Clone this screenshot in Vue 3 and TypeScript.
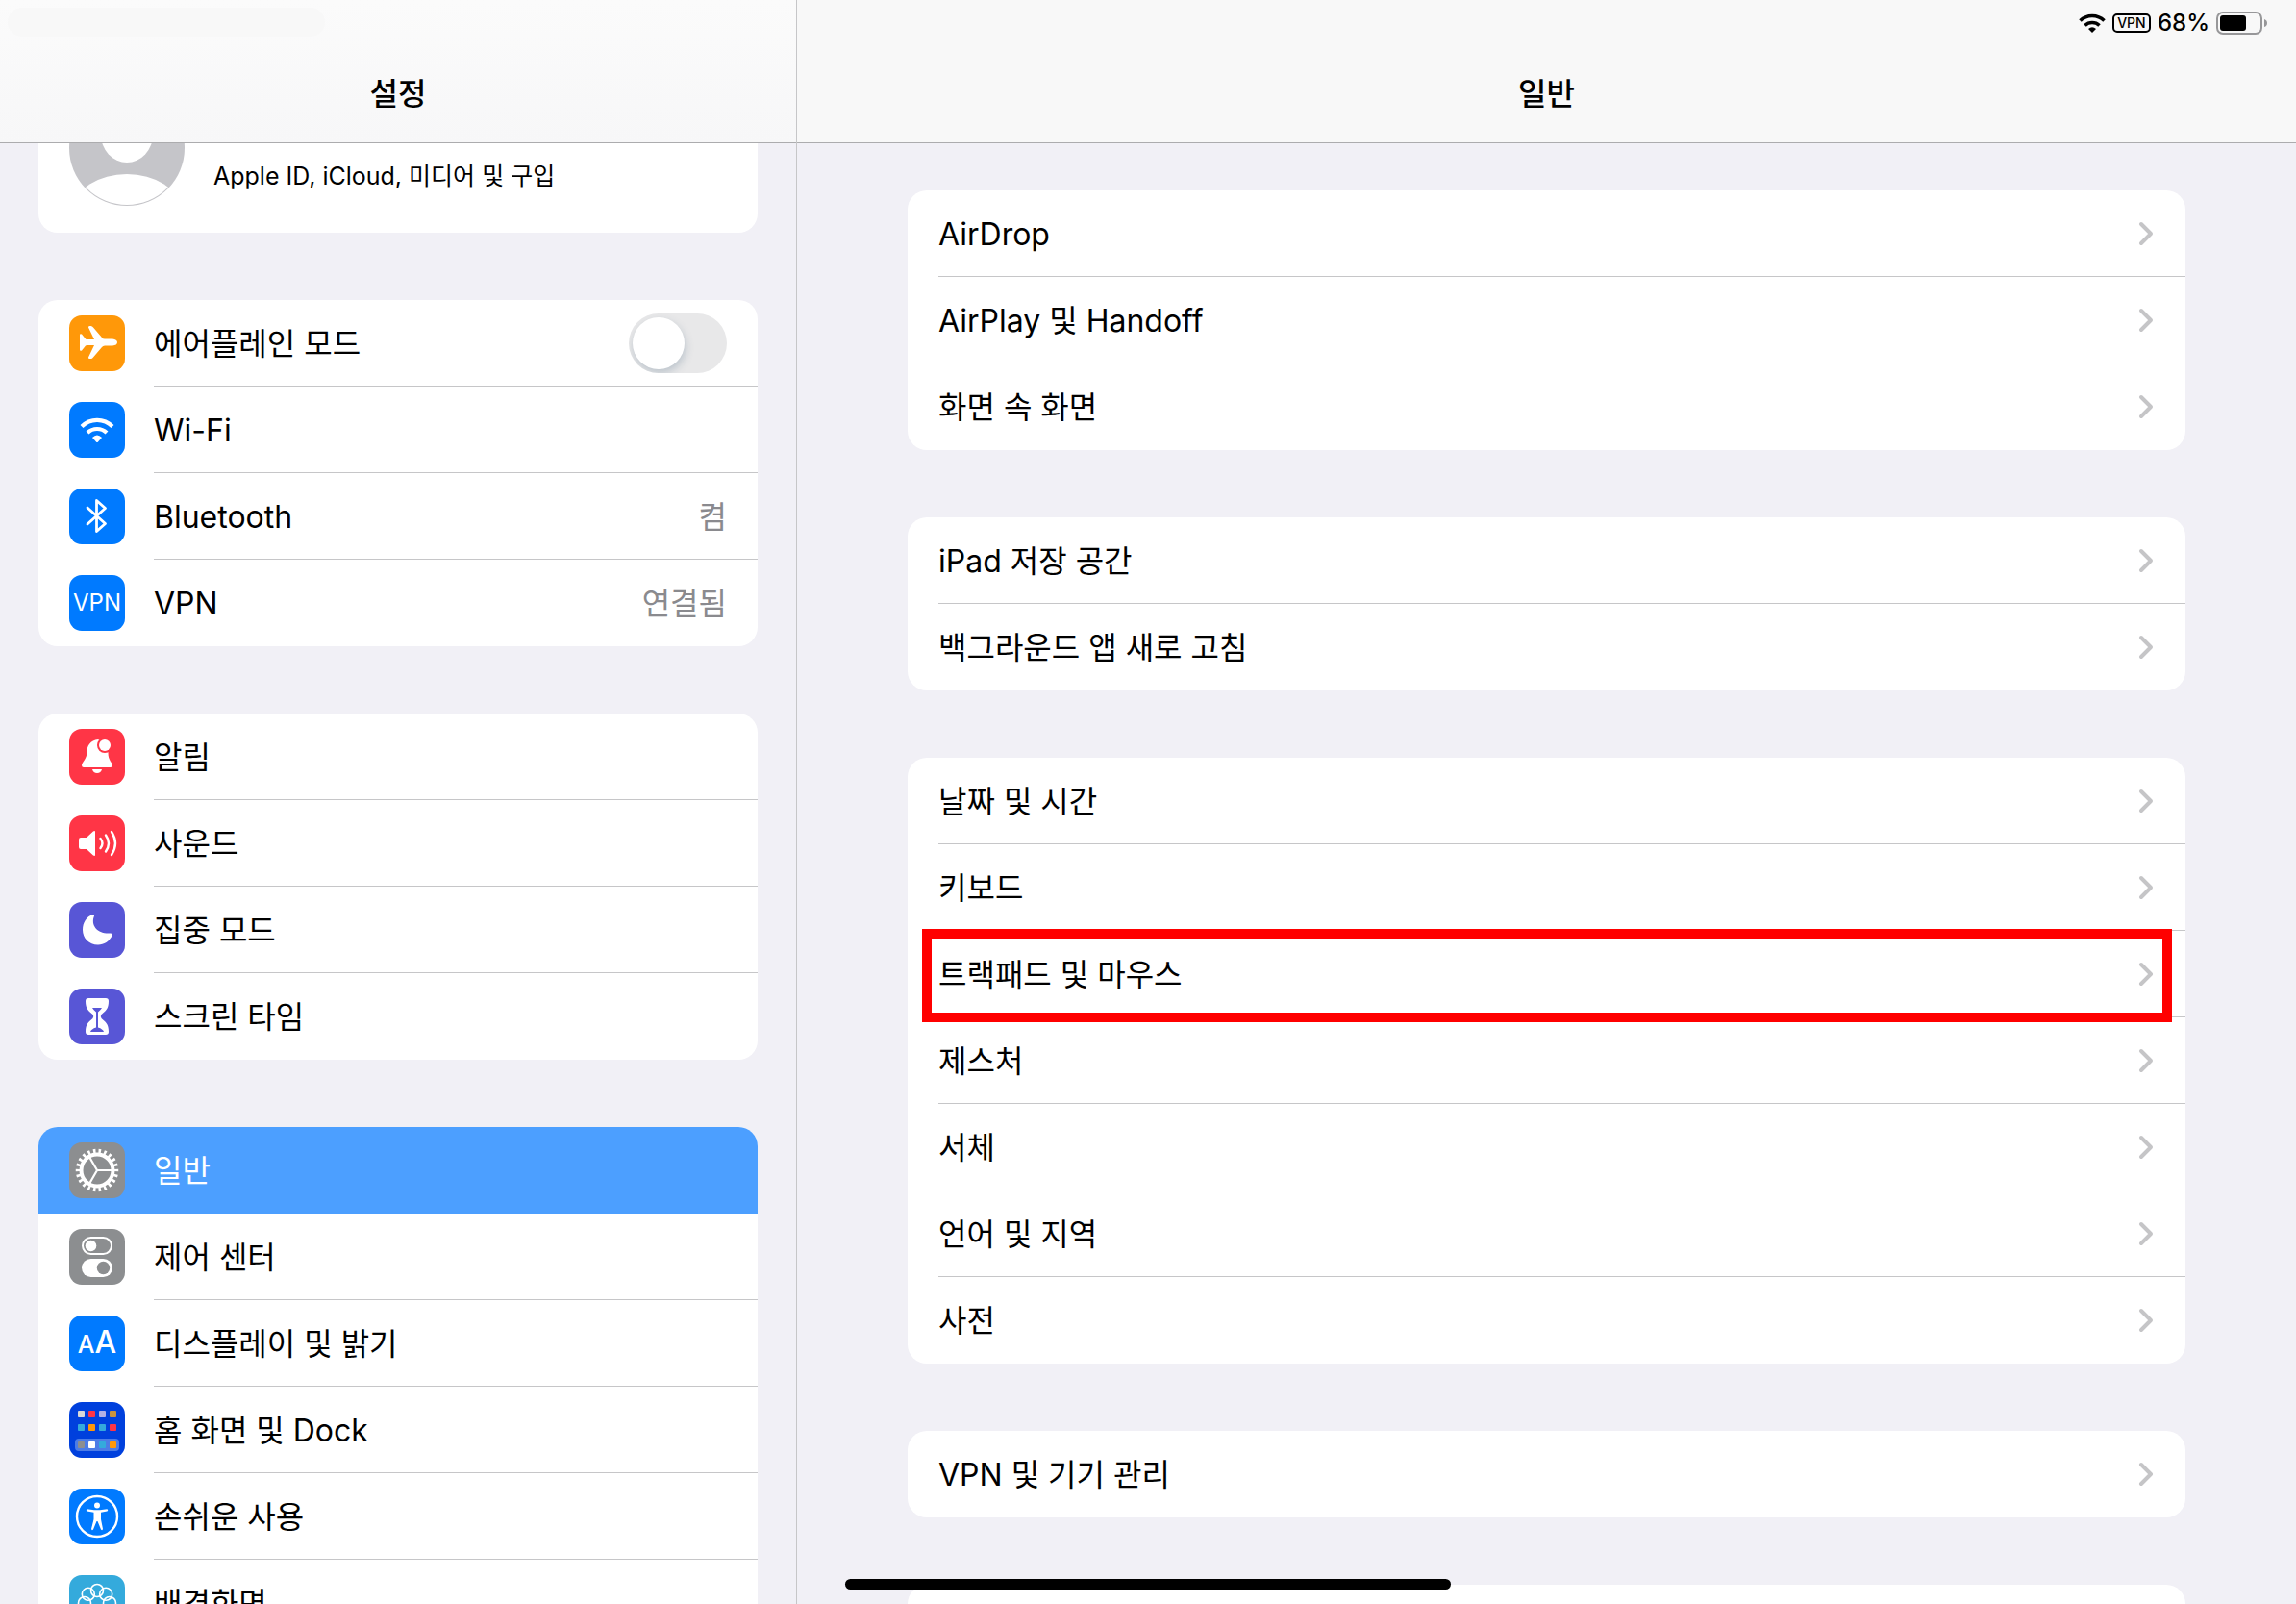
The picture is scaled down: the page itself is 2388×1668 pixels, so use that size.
<script setup lang="ts">
import { ref } from 'vue'

interface SideItem {
  label: string
  icon: string
  color: string
  value?: string
  toggle?: boolean
  active?: boolean
}

interface DetailItem {
  label: string
  marked?: boolean
}

const airplaneMode = ref(false)

const sideGroups: SideItem[][] = [
  [
    { label: '에어플레인 모드', icon: 'airplane', color: '#ff9809', toggle: true },
    { label: 'Wi-Fi', icon: 'wifi', color: '#007aff' },
    { label: 'Bluetooth', icon: 'bluetooth', color: '#007aff', value: '켬' },
    { label: 'VPN', icon: 'vpn', color: '#007aff', value: '연결됨' },
  ],
  [
    { label: '알림', icon: 'bell', color: '#ff3546' },
    { label: '사운드', icon: 'sound', color: '#ff3546' },
    { label: '집중 모드', icon: 'moon', color: '#5856d6' },
    { label: '스크린 타임', icon: 'hourglass', color: '#5856d6' },
  ],
  [
    { label: '일반', icon: 'gear', color: '#8c8e90', active: true },
    { label: '제어 센터', icon: 'control', color: '#8c8e90' },
    { label: '디스플레이 및 밝기', icon: 'display', color: '#007aff' },
    { label: '홈 화면 및 Dock', icon: 'home', color: '#0040dd' },
    { label: '손쉬운 사용', icon: 'access', color: '#007aff' },
    { label: '배경화면', icon: 'wallpaper', color: '#34aadc' },
  ],
]

const detailGroups: DetailItem[][] = [
  [{ label: 'AirDrop' }, { label: 'AirPlay 및 Handoff' }, { label: '화면 속 화면' }],
  [{ label: 'iPad 저장 공간' }, { label: '백그라운드 앱 새로 고침' }],
  [
    { label: '날짜 및 시간' },
    { label: '키보드' },
    { label: '트랙패드 및 마우스', marked: true },
    { label: '제스처' },
    { label: '서체' },
    { label: '언어 및 지역' },
    { label: '사전' },
  ],
  [{ label: 'VPN 및 기기 관리' }],
  [{ label: '' }],
]

const homeTiles = [
  ['#d8d8d8', '#ff3546', '#b3b1e4', '#c9933f'],
  ['#34aadc', '#ff9809', '#34aadc', '#ff3546'],
  ['#8c8e90', '#ffffff', '#34aadc', '#ff9809'],
]
const tileRows = [9, 23, 41]

const petals = Array.from({ length: 8 }, (_, i) => {
  const angle = (i * Math.PI) / 4
  return { x: 29 + 13 * Math.sin(angle), y: 29 - 13 * Math.cos(angle) }
})
</script>

<template>
  <div class="screen">
    <aside class="pane sidebar">
      <header class="bar">
        <div class="smudge"></div>
        <h1>설정</h1>
      </header>
      <div class="side-body">
        <a class="card profile" href="#profile">
          <svg class="avatar" viewBox="0 0 120 120" aria-hidden="true">
            <defs>
              <clipPath id="face"><circle cx="60" cy="60" r="59" /></clipPath>
            </defs>
            <circle cx="60" cy="60" r="60" fill="#c5c5c9" />
            <g clip-path="url(#face)" fill="#fff">
              <ellipse cx="60" cy="46" rx="27" ry="29" />
              <ellipse cx="60" cy="122" rx="54" ry="35" />
            </g>
          </svg>
          <span class="profile-text">Apple ID, iCloud, 미디어 및 구입</span>
        </a>

        <ul v-for="(group, g) in sideGroups" :key="g" class="card">
          <li v-for="item in group" :key="item.label">
            <component
              :is="item.toggle ? 'label' : 'a'"
              class="row side-row"
              :class="{ active: item.active }"
              :href="item.toggle ? undefined : '#' + item.icon"
            >
              <span class="icon" :style="{ background: item.color }">
                <span v-if="item.icon === 'vpn'" class="vpn-glyph">VPN</span>
                <span v-else-if="item.icon === 'display'" class="aa-glyph"><small>A</small>A</span>
                <svg v-else viewBox="0 0 58 58" aria-hidden="true">
                  <path
                    v-if="item.icon === 'airplane'"
                    fill="#fff"
                    d="M11 20.5Q11 18.5 13 19.5L17 24.5Q17.5 25 18.5 25H26L20 12.5Q19.500 11 21.500 11H22.500Q24 11 25 12.500L34 23Q35 24.500 37 24.500H45Q50 25 50 28Q50 31 45 31.500H37Q35 31.500 34 33L25 43.500Q24 45 22.500 45H21.500Q19.500 45 20 43.500L26 31H18.500Q17.500 31 17 31.500L13 36.500Q11 37.500 11 35.500Z"
                  />
                  <g v-else-if="item.icon === 'wifi'">
                    <path d="M13 25.500A22.500 22.500 0 0 1 45 25.500M19 32A14.500 14.500 0 0 1 39 32" fill="none" stroke="#fff" stroke-width="4.200" />
                    <path d="M24 37Q29 32 34 37L30 41.500Q29 42.500 28 41.500Z" fill="#fff" />
                  </g>
                  <path
                    v-else-if="item.icon === 'bluetooth'"
                    d="M19 20L37.500 36.500L28.500 44.500V12.500L37.500 20.500L19 37"
                    fill="none"
                    stroke="#fff"
                    stroke-width="2.800"
                    stroke-linecap="round"
                    stroke-linejoin="round"
                  />
                  <g v-else-if="item.icon === 'bell'">
                    <path fill="#fff" d="M30 11C22 12 18.500 17.500 18.500 24C18.500 31 13 35 13 38Q13 40 15 40H43Q45 40 45 38C45 35 40.500 33 40.500 25V14Z" />
                    <path fill="#fff" d="M24 42H34Q33 46 29 46T24 42Z" />
                    <circle cx="37" cy="17" r="8" :fill="item.color" />
                    <circle cx="37" cy="17" r="6" fill="#fff" />
                  </g>
                  <g v-else-if="item.icon === 'sound'">
                    <path fill="#fff" d="M12 23H18L25 16.500Q27 15.500 27 17V41Q27 42.500 25 41.500L18 35H12Q10 35 10 33V25Q10 23 12 23Z" />
                    <path d="M32.500 24Q36.500 29 32.500 34M38 20.500Q44 29 38 37.500M44 17Q52 29 44 41" fill="none" stroke="#fff" stroke-width="2.400" stroke-linecap="round" />
                  </g>
                  <path
                    v-else-if="item.icon === 'moon'"
                    fill="#fff"
                    d="M24.500 13Q26.500 12.500 26 14.500C22 24 29 33.500 43 32.500Q45.500 32.500 45 34C42 41 36 44.500 30 44.500C20.500 44.500 14 37.500 14 29C14 21.500 18 15 24.500 13Z"
                  />
                  <g v-else-if="item.icon === 'hourglass'">
                    <path fill="#fff" d="M20 10H38Q41 10 41 13C41 21 38 23 33.500 27Q32 29 33.500 31C38 35 41 37 41 45Q41 48 38 48H20Q17 48 17 45C17 37 20 35 24.500 31Q26 29 24.500 27C20 23 17 21 17 13Q17 10 20 10Z" />
                    <path :fill="item.color" d="M24 20H34Q33 22 30 24.500V40.500Q35 42 36 45H22Q23 42 28 40.500V24.500Q25 22 24 20Z" />
                  </g>
                  <g v-else-if="item.icon === 'gear'" fill="none" stroke="#fff">
                    <circle cx="29" cy="29" r="16.500" stroke-width="4" />
                    <circle cx="29" cy="29" r="20" stroke-width="4.500" pathLength="22" stroke-dasharray=".45 .55" stroke-dashoffset=".225" />
                    <path d="M29 29H44M29 29L21.500 16M29 29L21.500 42" stroke-width="2.200" />
                  </g>
                  <g v-else-if="item.icon === 'control'">
                    <rect x="14" y="9" width="30" height="17" rx="8.500" fill="none" stroke="#fff" stroke-width="2" />
                    <circle cx="22.500" cy="17.500" r="5.800" fill="#fff" />
                    <rect x="13" y="31" width="32" height="19" rx="9.500" fill="#fff" />
                    <circle cx="35.500" cy="40.500" r="6.700" :fill="item.color" />
                  </g>
                  <g v-else-if="item.icon === 'home'">
                    <rect x="6" y="38" width="46" height="13" rx="4" fill="#4c7ce6" />
                    <template v-for="(tiles, r) in homeTiles" :key="r">
                      <rect v-for="(tile, c) in tiles" :key="c" :x="9 + c * 11" :y="tileRows[r]" width="7" height="7" rx="1" :fill="tile" />
                    </template>
                  </g>
                  <g v-else-if="item.icon === 'access'">
                    <circle cx="29" cy="29" r="21" fill="none" stroke="#fff" stroke-width="2.400" />
                    <circle cx="29" cy="17.500" r="3" fill="#fff" />
                    <path fill="#fff" d="M18.500 21.200L26 22.200H32L39.500 21.200Q41 22.500 39.500 23.500L33 24.800V32L35 42Q34.500 44 33 42.500L29.500 34H28.500L25 42.500Q23.500 44 23 42L25.500 32V24.800L18.500 23.500Q17 22.500 18.500 21.200Z" />
                  </g>
                  <g v-else-if="item.icon === 'wallpaper'" fill="none" stroke="#fff" stroke-width="1.600">
                    <circle v-for="(petal, p) in petals" :key="p" :cx="petal.x" :cy="petal.y" r="6.500" />
                  </g>
                </svg>
              </span>
              <span class="side-main">
                <span class="label">{{ item.label }}</span>
                <span v-if="item.value" class="value">{{ item.value }}</span>
                <input v-if="item.toggle" v-model="airplaneMode" class="switch" type="checkbox" role="switch" />
              </span>
            </component>
          </li>
        </ul>
      </div>
    </aside>

    <main class="pane detail">
      <header class="bar">
        <div class="status">
          <svg class="status-wifi" viewBox="0 0 28 20" aria-hidden="true">
            <path d="M1.500 7.500A18 18 0 0 1 26.500 7.500M6.500 12.500A11 11 0 0 1 21.500 12.500" fill="none" stroke="#000" stroke-width="3.600" />
            <path d="M10 16Q14 12.500 18 16L14 20Z" />
          </svg>
          <span class="status-vpn">VPN</span>
          <span class="status-level">68%</span>
          <svg class="status-battery" viewBox="0 0 54 24" aria-hidden="true">
            <rect x="1" y="1" width="46" height="22" rx="6" fill="none" stroke="#979799" stroke-width="2" />
            <rect x="4" y="4" width="27" height="16" rx="3" />
            <path d="M50 8Q53 9 53 12T50 16Z" fill="#979799" />
          </svg>
        </div>
        <h2>일반</h2>
      </header>
      <div class="detail-body">
        <ul v-for="(group, g) in detailGroups" :key="g" class="card">
          <li v-for="item in group" :key="item.label" :class="{ marked: item.marked }">
            <a class="row detail-row" href="#detail">
              <span class="detail-main">
                <span class="label">{{ item.label }}</span>
                <svg class="chevron" viewBox="0 0 14 24" aria-hidden="true">
                  <path d="M2 2L12 12L2 22" fill="none" stroke="#c5c5c7" stroke-width="4" stroke-linecap="round" stroke-linejoin="round" />
                </svg>
              </span>
            </a>
          </li>
        </ul>
      </div>
    </main>

    <div class="home-indicator"></div>
  </div>
</template>

<style>
body {
  background: #f1f0f6;
}
</style>

<style scoped>
* {
  box-sizing: border-box;
}

.screen {
  position: relative;
  display: flex;
  height: 100vh;
  overflow: hidden;
  background: #f1f0f6;
  color: #000;
  font-family: Inter, 'Noto Sans CJK KR', sans-serif;
  font-size: 32px;
  line-height: 40px;
}

.pane {
  display: flex;
  flex-direction: column;
  overflow: hidden;
}

.sidebar {
  flex: 0 0 829px;
  border-right: 1px solid #c6c6c8;
}

.detail {
  flex: 1;
}

.bar {
  position: relative;
  flex: none;
  display: flex;
  flex-direction: column;
  justify-content: flex-end;
  height: 149px;
  padding-bottom: 30px;
  border-bottom: 1px solid #acacae;
  background: linear-gradient(#fbfbfb, #f7f7f8);
  text-align: center;
}

.detail .bar {
  background: #f8f8f8;
}

h1,
h2 {
  margin: 0;
  font-size: 32px;
  line-height: 40px;
  font-weight: 500;
}

.smudge {
  position: absolute;
  top: 8px;
  left: 8px;
  width: 330px;
  height: 30px;
  border-radius: 15px;
  background: #f8f8f8;
}

.side-body {
  padding: 0 40px;
}

.card {
  display: block;
  margin: 0 0 70px;
  padding: 0;
  border-radius: 20px;
  background: #fff;
  list-style: none;
}

.profile {
  display: flex;
  align-items: flex-end;
  gap: 30px;
  height: 93px;
  padding: 0 32px 28px;
  border-radius: 0 0 20px 20px;
  overflow: hidden;
  color: #000;
  text-decoration: none;
}

.avatar {
  flex: none;
  width: 120px;
  height: 120px;
}

.profile-text {
  padding-bottom: 11px;
  font-size: 25px;
}

.row {
  display: flex;
  align-items: center;
  height: 90px;
  color: #000;
  text-decoration: none;
}

.side-row {
  gap: 30px;
  padding-left: 32px;
}

.side-row.active {
  border-radius: 20px 20px 0 0;
  background: #4c9fff;
  color: #fff;
}

.icon {
  display: flex;
  flex: none;
  align-items: center;
  justify-content: center;
  width: 58px;
  height: 58px;
  border-radius: 13px;
  color: #fff;
}

.icon svg {
  width: 58px;
  height: 58px;
}

.vpn-glyph {
  font-size: 24px;
}

.aa-glyph {
  display: flex;
  align-items: baseline;
  font-size: 32px;
  font-weight: 500;
}

.aa-glyph small {
  font-size: 25px;
}

.side-main,
.detail-main {
  display: flex;
  flex: 1;
  align-items: center;
  justify-content: space-between;
  height: 90px;
  border-bottom: 1px solid #c6c6c8;
}

.side-main {
  padding-right: 32px;
}

.detail-main {
  padding-right: 34px;
}

.label,
.value {
  padding-top: 2px;
}

.card li:last-child .side-main,
.card li:last-child .detail-main,
.side-row.active .side-main {
  border-bottom-color: transparent;
}

.value {
  color: #8a8a8e;
}

.switch {
  position: relative;
  appearance: none;
  width: 102px;
  height: 62px;
  margin: 0;
  border-radius: 31px;
  background: #e8e8e9;
  overflow: hidden;
}

.switch::before {
  content: '';
  position: absolute;
  top: 4px;
  left: 4px;
  width: 54px;
  height: 54px;
  border-radius: 50%;
  background: #fff;
  box-shadow: 1px 4px 8px rgba(60, 90, 120, 0.25);
}

.switch:checked {
  background: #34c759;
}

.switch:checked::before {
  left: 44px;
}

.detail-body {
  padding: 49px 115px 0;
}

.detail-row {
  padding-left: 32px;
}

.chevron {
  width: 14px;
  height: 24px;
  overflow: visible;
}

.marked {
  position: relative;
}

.marked::after {
  content: '';
  position: absolute;
  top: -2px;
  right: 14px;
  bottom: -5px;
  left: 15px;
  border: 10px solid #f00;
}

.status {
  position: absolute;
  top: 8px;
  right: 29px;
  display: flex;
  align-items: center;
  gap: 7px;
  height: 32px;
}

.status-wifi {
  width: 28px;
  height: 20px;
}

.status-vpn {
  width: 40px;
  height: 20px;
  border: 2px solid #000;
  border-radius: 5px;
  font-size: 14px;
  line-height: 16px;
  font-weight: 500;
}

.status-level {
  font-size: 24px;
  line-height: 32px;
  font-weight: 500;
}

.status-battery {
  width: 54px;
  height: 24px;
}

.home-indicator {
  position: absolute;
  bottom: 15px;
  left: 879px;
  width: 630px;
  height: 11px;
  border-radius: 6px;
  background: #000;
}
</style>
